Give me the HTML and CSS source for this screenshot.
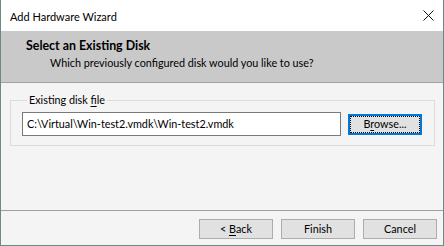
FILE: index.html
```html
<!DOCTYPE html>
<html>
<head>
<meta charset="utf-8">
<link rel="stylesheet" href="styles.css">
</head>
<body>
<div class="window">
  <div class="titlebar">
    <span class="title">Add Hardware Wizard</span>
    <svg class="close" width="11" height="11" viewBox="0 0 11 11"><path d="M0.5 0.5L10.5 10.5M10.5 0.5L0.5 10.5" stroke="#111" stroke-width="1"/></svg>
  </div>
  <div class="header">
    <div class="h-title">Select an Existing Disk</div>
    <div class="h-sub">Which previously configured disk would you like to use?</div>
  </div>
  <div class="content">
    <fieldset class="group">
      <legend class="legend">Existing disk <u>f</u>ile</legend>
      <div class="row">
        <div class="input">C:\Virtual\Win-test2.vmdk\Win-test2.vmdk</div>
        <div class="btn focus"><span>B<u>r</u>owse...</span></div>
      </div>
    </fieldset>
  </div>
  <div class="footer">
    <div class="btn"><span>&lt; <u>B</u>ack</span></div>
    <div class="btn"><span>Finish</span></div>
    <div class="btn"><span>Cancel</span></div>
  </div>
</div>
</body>
</html>
```
FILE: styles.css
```css
html, body {
  margin: 0;
  padding: 0;
  background: #f4f4f4;
}
body {
  font-family: Lato, "Noto Sans", sans-serif;
  font-size: 10.8px;
  color: #000;
}
.window {
  width: 444px;
  height: 246px;
  box-sizing: border-box;
  border: 1px solid #6b8985;
  border-top: none;
  display: flex;
  flex-direction: column;
  background: #f4f4f4;
}
.titlebar {
  height: 31px;
  flex: none;
  background: #fff;
  display: flex;
  align-items: center;
  justify-content: space-between;
  padding: 0 9px 0 9px;
}
.title {
  font-size: 11px;
  padding-top: 1px;
}
.close {
  margin-top: -1px;
}
.header {
  height: 51px;
  flex: none;
  background: #c9c9c9;
  border-bottom: 1px solid #a3a3a3;
  display: flex;
  flex-direction: column;
}
.h-title {
  font-weight: bold;
  font-size: 12.4px;
  line-height: 16px;
  margin: 7px 0 0 25px;
}
.h-sub {
  line-height: 16px;
  margin: 1px 0 0 49px;
}
.content {
  flex: 1;
  padding: 9px 9px 0 9px;
}
.group {
  margin: 0;
  border: 1px solid #dcdcdc;
  padding: 4px 12px 9px 11px;
}
.legend {
  padding: 0 2px;
  margin-left: 5px;
  line-height: 16px;
}
.row {
  display: flex;
  align-items: center;
  gap: 7px;
}
.input {
  width: 319px;
  height: 24px;
  box-sizing: border-box;
  border: 1px solid #7a7a7a;
  background: #fff;
  padding: 0 4px;
  line-height: 22px;
  white-space: nowrap;
}
.btn {
  width: 74px;
  height: 21px;
  box-sizing: border-box;
  border: 1px solid #adadad;
  background: #e1e1e1;
  display: flex;
  align-items: center;
  justify-content: center;
  line-height: 16px;
  white-space: pre;
}
.btn.focus {
  border: 2px solid #0078d7;
  outline: 1px dotted #000;
  outline-offset: -3px;
}
.footer {
  height: 35px;
  flex: none;
  box-sizing: border-box;
  border-top: 1px solid #a0a0a0;
  display: flex;
  justify-content: flex-end;
  align-items: flex-start;
  gap: 8px;
  padding: 8px 6px 0 0;
}
.footer .btn {
  width: 74px;
  height: 20px;
}
u {
  text-decoration: underline;
  text-underline-offset: 2px;
}
```
